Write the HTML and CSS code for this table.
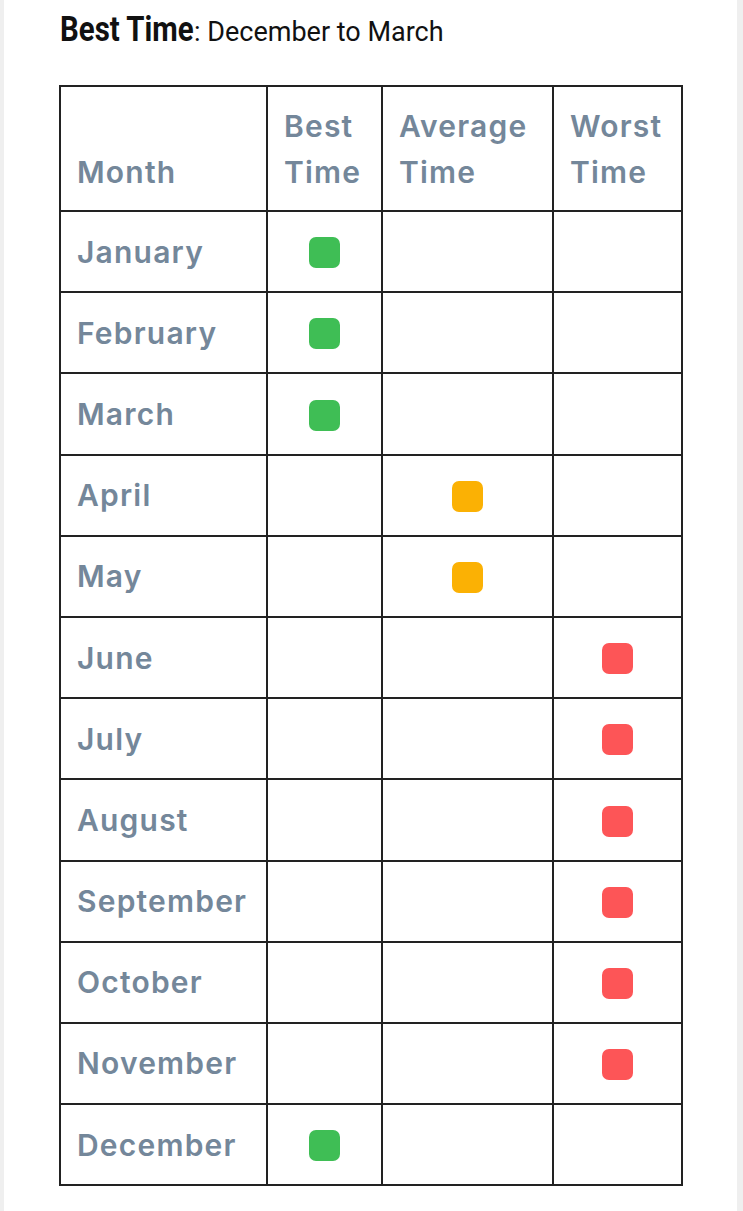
FILE: index.html
```html
<!DOCTYPE html>
<html>
<head>
<meta charset="utf-8">
<link rel="stylesheet" href="styles.css">
</head>
<body>
<div class="card">
  <p class="title"><span class="title-strong">Best Time</span>: December to March</p>
  <table class="months">
    <thead>
      <tr>
        <th class="c-month">Month</th>
        <th class="c-best">Best Time</th>
        <th class="c-avg">Average Time</th>
        <th class="c-worst">Worst Time</th>
      </tr>
    </thead>
    <tbody>
      <tr><td>January</td><td class="mark"><span class="dot green"></span></td><td></td><td></td></tr>
      <tr><td>February</td><td class="mark"><span class="dot green"></span></td><td></td><td></td></tr>
      <tr><td>March</td><td class="mark"><span class="dot green"></span></td><td></td><td></td></tr>
      <tr><td>April</td><td></td><td class="mark"><span class="dot orange"></span></td><td></td></tr>
      <tr><td>May</td><td></td><td class="mark"><span class="dot orange"></span></td><td></td></tr>
      <tr><td>June</td><td></td><td></td><td class="mark"><span class="dot red"></span></td></tr>
      <tr><td>July</td><td></td><td></td><td class="mark"><span class="dot red"></span></td></tr>
      <tr><td>August</td><td></td><td></td><td class="mark"><span class="dot red"></span></td></tr>
      <tr><td>September</td><td></td><td></td><td class="mark"><span class="dot red"></span></td></tr>
      <tr><td>October</td><td></td><td></td><td class="mark"><span class="dot red"></span></td></tr>
      <tr><td>November</td><td></td><td></td><td class="mark"><span class="dot red"></span></td></tr>
      <tr><td>December</td><td class="mark"><span class="dot green"></span></td><td></td><td></td></tr>
    </tbody>
  </table>
</div>
</body>
</html>
```

FILE: styles.css
```css
html, body {
  margin: 0;
  padding: 0;
  background: #efefef;
}

.card {
  background: #ffffff;
  margin: 0 6px 0 4px;
  padding: 12px 0 25px 55px;
  min-height: 1174px;
}

.title {
  margin: 0 0 0 1px;
  font-family: Roboto, "Liberation Sans", sans-serif;
  font-size: 27px;
  line-height: 36px;
  color: #111111;
}

.title-strong {
  display: inline-block;
  font-weight: 700;
  font-size: 35px;
  transform: scaleX(0.84);
  transform-origin: left center;
  margin-right: -25px;
}

.months {
  margin-top: 35px;
  border-collapse: collapse;
  font-family: Inter, "Open Sans", sans-serif;
  font-weight: 600;
  font-size: 30px;
  letter-spacing: 1.2px;
  color: #74879a;
  table-layout: fixed;
  width: 622px;
}

.months th,
.months td {
  border: 2px solid #222222;
  padding: 0 4px 0 16px;
  text-align: left;
}

.months th {
  font-weight: 600;
  line-height: 46px;
  height: 125px;
  vertical-align: bottom;
  padding-bottom: 15px;
  box-sizing: border-box;
}

.months td {
  height: 81.2px;
  box-sizing: border-box;
  vertical-align: middle;
}

.c-month { width: 207px; }
.c-best { width: 115px; }
.c-avg { width: 171px; }
.c-worst { width: 129px; }

.months td.mark {
  text-align: center;
  padding: 0 0 3px 0;
}

.dot {
  display: inline-block;
  width: 31px;
  height: 31px;
  border-radius: 7px;
  vertical-align: middle;
}

.green { background: #3fbe55; }
.orange { background: #fbb104; }
.red { background: #fd5557; }
```
